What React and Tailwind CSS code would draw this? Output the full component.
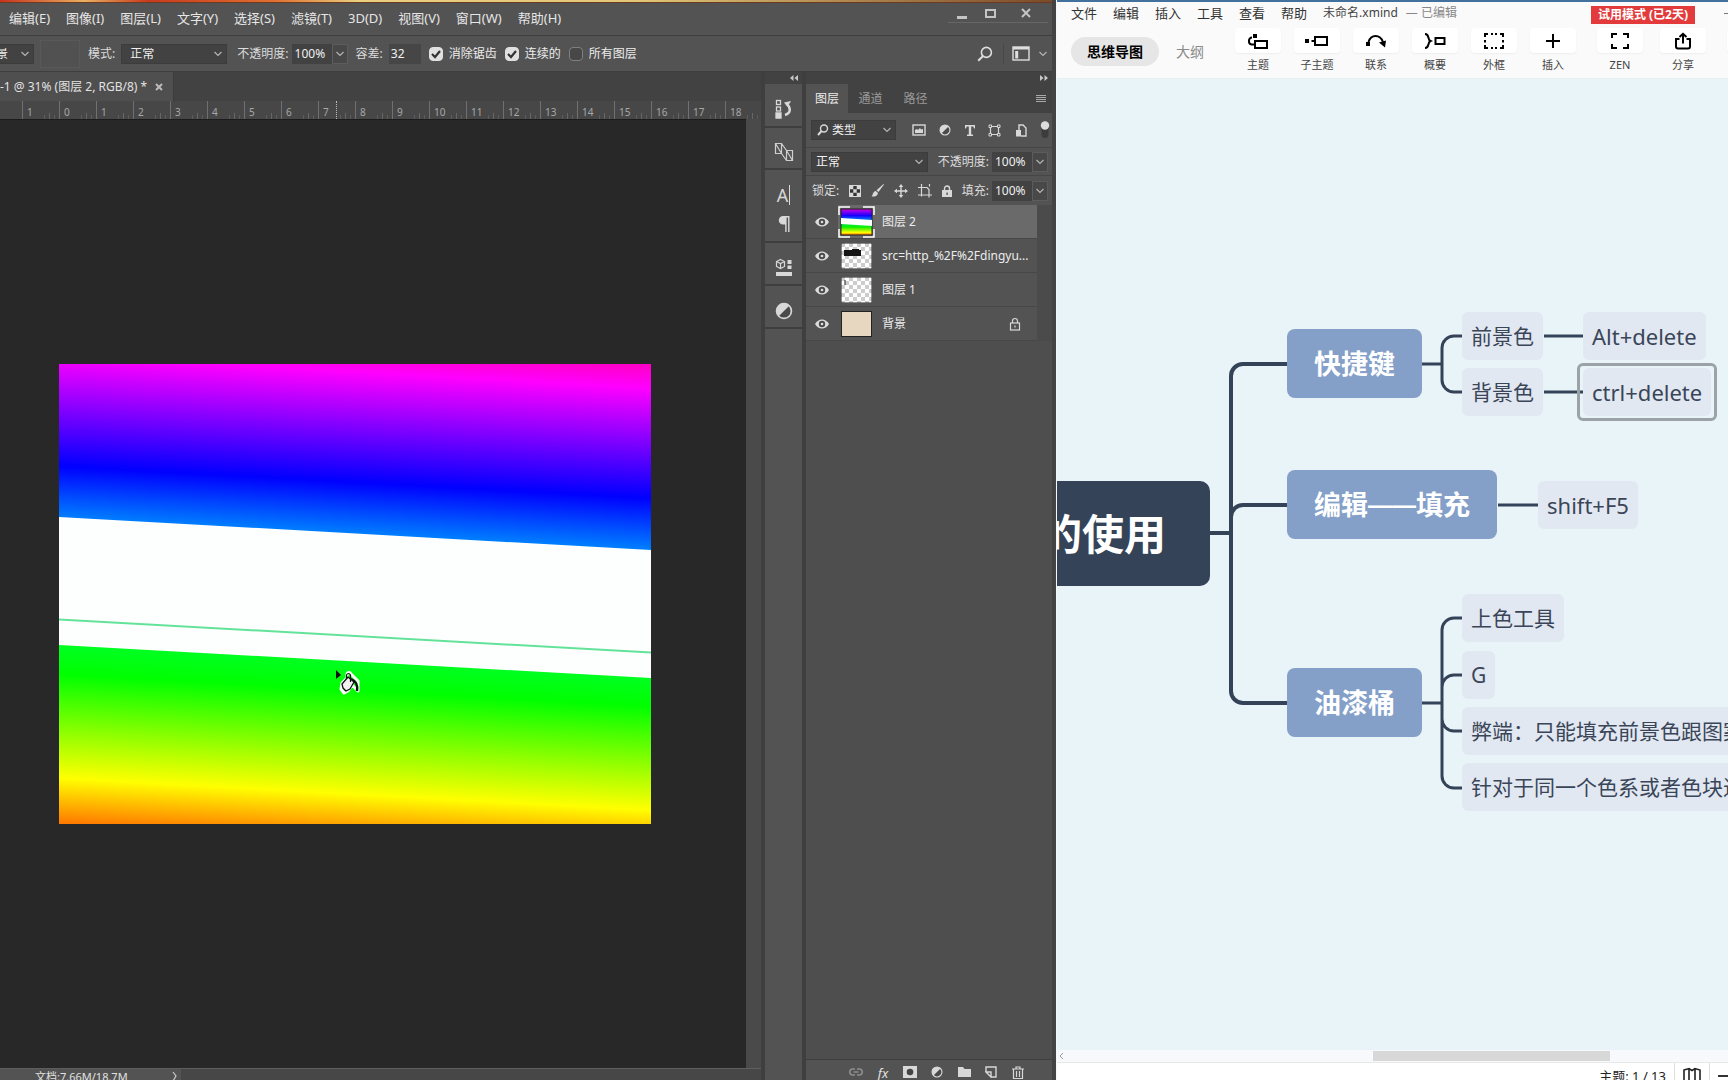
import React from "react";

const uiFont = "font-['Noto_Sans','Noto_Sans_CJK_SC',sans-serif]";

function Chevron({ className = "" }) {
  return (
    <svg viewBox="0 0 10 6" className={`pointer-events-none h-1.5 w-2.5 ${className}`} fill="none" stroke="#b4b4b4" strokeWidth="1.2" aria-hidden="true">
      <path d="M1.5 1 5 4.5 8.5 1" />
    </svg>
  );
}

function DarkSelect({ label, value, className = "", selectClass = "" }) {
  return (
    <div className={`relative flex shrink-0 ${className}`}>
      <select aria-label={label} defaultValue={value} className={`h-5 w-full appearance-none border border-[#3c3c3c] bg-[#424242] text-xs leading-none text-[#f0f0f0] outline-none ${selectClass}`}>
        <option>{value}</option>
      </select>
      <Chevron className="absolute right-1 top-[7px]" />
    </div>
  );
}

function PercentField({ label, id }) {
  return (
    <div className="flex shrink-0 items-center">
      <label htmlFor={id} className="whitespace-nowrap text-xs text-[#dcdcdc]">{label}</label>
      <input id={id} defaultValue="100%" className="h-5 w-10 bg-[#424242] pl-[3px] text-xs text-[#f0f0f0] outline-none" />
      <button aria-label={`${label} 选项`} className="flex h-5 w-4 items-center justify-center border border-[#5c5c5c] bg-[#484848]">
        <Chevron />
      </button>
    </div>
  );
}

function Tick({ label, checked }) {
  return (
    <label className="flex shrink-0 items-center gap-1.5 whitespace-nowrap text-xs text-[#ececec]">
      <span className="relative flex size-3.5">
        <input type="checkbox" defaultChecked={checked} className="peer size-3.5 appearance-none rounded-sm border border-[#808080] bg-[#474747] checked:border-[#e0e0e0] checked:bg-[#e0e0e0]" />
        <svg viewBox="0 0 14 14" className="pointer-events-none absolute inset-0 hidden size-3.5 peer-checked:block" fill="none" stroke="#333" strokeWidth="2.2" aria-hidden="true">
          <path d="M3 7l3 3 5-6" />
        </svg>
      </span>
      {label}
    </label>
  );
}

const psMenus = ["编辑(E)", "图像(I)", "图层(L)", "文字(Y)", "选择(S)", "滤镜(T)", "3D(D)", "视图(V)", "窗口(W)", "帮助(H)"];

function PsMenuBar() {
  return (
    <header className="flex h-[33px] shrink-0 items-start justify-between border-b border-[#3e3e3e] bg-[#535353]">
      <nav className="flex h-8 items-center gap-4 pl-[9px]">
        {psMenus.map((m) => (
          <button key={m} className="whitespace-nowrap text-[13px] text-[#e6e6e6]">{m}</button>
        ))}
      </nav>
      <div className="mr-1 flex h-5 items-center border-b border-[#666]">
        <button aria-label="最小化" className="flex h-full w-7 items-center justify-center">
          <svg viewBox="0 0 12 12" className="size-3"><path d="M1 9h10v3H1z" fill="#c4c4c4" /></svg>
        </button>
        <button aria-label="最大化" className="flex h-full w-7 items-center justify-center">
          <svg viewBox="0 0 12 12" className="size-3"><rect x="2" y="3" width="9" height="7" fill="none" stroke="#c4c4c4" strokeWidth="2" /></svg>
        </button>
        <button aria-label="关闭" className="flex h-full w-11 items-center justify-center">
          <svg viewBox="0 0 12 12" className="size-3"><path d="M2 2l8 8M10 2l-8 8" fill="none" stroke="#c4c4c4" strokeWidth="2" /></svg>
        </button>
      </div>
    </header>
  );
}

function PsOptionsBar() {
  return (
    <div className="flex h-9 shrink-0 items-center border-b border-[#3e3e3e] bg-[#535353]">
      <DarkSelect label="填充源" value="前景" className="-ml-5 w-[54px]" selectClass="pl-[3px]" />
      <div className="ml-1.5 h-7 w-10 shrink-0 border border-[#595959] bg-[#515151]" />
      <span className="ml-2 shrink-0 text-xs text-[#dcdcdc]">模式:</span>
      <DarkSelect label="模式" value="正常" className="ml-1.5 w-[106px]" selectClass="pl-2" />
      <div className="ml-2.5"><PercentField id="tool-opacity" label={"不透明度:\u00a0"} /></div>
      <label htmlFor="tolerance" className="ml-2 shrink-0 text-xs text-[#dcdcdc]">容差:</label>
      <input id="tolerance" defaultValue="32" className="ml-1.5 h-5 w-8 shrink-0 bg-[#464646] pl-0.5 text-xs text-[#f0f0f0] outline-none" />
      <div className="ml-2 flex items-center gap-2">
        <Tick label="消除锯齿" checked />
        <Tick label="连续的" checked />
        <Tick label="所有图层" />
      </div>
      <div className="ml-auto mr-1 flex items-center">
        <button aria-label="搜索" className="mr-2.5">
          <svg viewBox="0 0 16 16" className="size-4" fill="none" stroke="#dedede" strokeWidth="1.6"><circle cx="9.4" cy="6.4" r="5" /><path d="M5.8 10.2 1.2 14.8" strokeWidth="2" /></svg>
        </button>
        <span className="h-5 w-px bg-[#474747]" />
        <button aria-label="工作区" className="ml-2 flex items-center gap-2">
          <svg viewBox="0 0 18 15" className="h-[15px] w-[18px]"><rect x="1" y="1" width="16" height="13" fill="none" stroke="#dedede" strokeWidth="1.4" /><path d="M1 1h16v2.4H1zM3.2 5h3v7.4h-3z" fill="#dedede" /></svg>
          <Chevron />
        </button>
      </div>
    </div>
  );
}

function Ruler() {
  const marks = ["1", ...Array.from({ length: 19 }, (_, i) => String(i))];
  return (
    <div className="relative flex h-[18px] shrink-0 overflow-hidden bg-[#474747]">
      <div className="w-[22px] shrink-0" />
      {marks.map((m, i) => (
        <div key={i} className="flex w-[37px] shrink-0 items-end justify-between border-l border-[#707070]">
          <span className="pl-1 text-[10px] leading-[14px] text-[#a8a8a8]">{m}</span>
          <span className="flex items-end gap-1 pr-1">
            <i className="h-1 w-px bg-[#5c5c5c]" />
            <i className="h-1.5 w-px bg-[#666]" />
            <i className="h-1 w-px bg-[#5c5c5c]" />
          </span>
        </div>
      ))}
      <div className="absolute left-[336px] top-0 h-full border-l border-dotted border-[#bdbdbd]" />
    </div>
  );
}

function Artwork() {
  return (
    <svg viewBox="0 0 592 460" className="h-[460px] w-[592px] shrink-0" role="img" aria-label="彩虹渐变画布">
      <defs>
        <linearGradient id="rainbow" gradientUnits="userSpaceOnUse" x1="0" y1="-112" x2="-33" y2="498">
          <stop offset="0" stopColor="#ff0000" />
          <stop offset="0.17" stopColor="#ff00ff" />
          <stop offset="0.35" stopColor="#0000ff" />
          <stop offset="0.52" stopColor="#00ffff" />
          <stop offset="0.644" stopColor="#00ff20" />
          <stop offset="0.69" stopColor="#00ff00" />
          <stop offset="0.86" stopColor="#ffff00" />
          <stop offset="1" stopColor="#ff0000" />
        </linearGradient>
      </defs>
      <rect width="592" height="460" fill="url(#rainbow)" />
      <path d="M0 153 592 186V314L0 281Z" fill="#fdfffe" />
      <path d="M0 255.500 592 288.500" stroke="#63e39a" strokeWidth="2" />
      <path d="M277 306v9l5-4z" fill="#101010" />
      <path d="M283 319l5-5v-4c1-2 3-2 4 0l7 7v10l-6-6-4 6-4 2-3-4z" fill="none" stroke="#fff" strokeWidth="3" strokeLinejoin="round" />
      <path d="M292 315c5 2 7 6 6 12" fill="none" stroke="#111" strokeWidth="2.4" />
      <path d="M283 320l6-7 6 5-4 7-4 2-3-3z" fill="#f2f2f2" stroke="#111" strokeWidth="1.3" strokeLinejoin="round" />
      <path d="M287.500 315v-4c1-2 3-2 4 0v7" fill="none" stroke="#111" strokeWidth="1.2" />
    </svg>
  );
}

function PsDocument() {
  return (
    <section className="flex min-w-0 flex-1 flex-col overflow-hidden bg-[#424242]">
      <div className="flex h-[29px] shrink-0">
        <div className="flex w-[174px] items-center gap-2 border-r border-[#3c3c3c] bg-[#4f4f4f] text-xs text-[#e2e2e2]">
          <span className="whitespace-nowrap">-1 @ 31% (图层 2, RGB/8) *</span>
          <button aria-label="关闭文档">
            <svg viewBox="0 0 8 8" className="size-2" fill="none" stroke="#bbb" strokeWidth="2"><path d="M1 1l6 6M7 1 1 7" /></svg>
          </button>
        </div>
      </div>
      <Ruler />
      <div className="flex min-h-0 flex-1 bg-[#4a4a4a]">
        <div className="flex flex-1 items-center justify-center overflow-hidden border-t border-[#1c1c1c] bg-[#282828] pr-9">
          <Artwork />
        </div>
        <div className="w-[15px] shrink-0" />
      </div>
      <footer className="flex h-3 shrink-0 overflow-hidden border-t border-[#5e5e5e] bg-[#474747] text-[11px] leading-[15px] text-[#e2e2e2]">
        <div className="flex w-[181px] justify-between bg-[#535353] pl-[35px] pr-1">
          <span>文档:7.66M/18.7M</span>
          <svg viewBox="0 0 5 10" className="mt-0.5 h-2.5 w-[5px]" fill="none" stroke="#ccc" strokeWidth="1.2" aria-hidden="true"><path d="M1 1l3 4-3 5" /></svg>
        </div>
      </footer>
    </section>
  );
}

function HalfCircle({ className = "size-4" }) {
  return (
    <svg viewBox="0 0 16 16" className={className} aria-hidden="true">
      <circle cx="8" cy="8" r="6.600" fill="#4a4a4a" stroke="#d8d8d8" strokeWidth="1.5" />
      <path d="M12.700 3.300A6.600 6.600 0 1 0 3.300 12.700Z" fill="#d8d8d8" />
    </svg>
  );
}

function DockGroup({ children, className }) {
  return (
    <div className={`flex flex-col items-center justify-evenly border-b-2 border-[#3e3e3e] ${className}`}>{children}</div>
  );
}

function PsDock() {
  return (
    <aside className="flex w-[45px] shrink-0 flex-col border-x-4 border-[#3f3f3f] bg-[#535353]">
      <div className="flex h-3 justify-end bg-[#424242] pr-1">
        <button aria-label="展开面板">
          <svg viewBox="0 0 8 6" className="h-1.5 w-2" fill="#c8c8c8"><path d="M3.500 0v6L0 3zM8 0v6L4.500 3z" /></svg>
        </button>
      </div>
      <DockGroup className="h-11 pt-2">
        <button aria-label="历史记录">
          <svg viewBox="0 0 18 20" className="h-5 w-[18px]" fill="none" stroke="#d8d8d8" strokeWidth="1.3">
            <rect x="1.500" y="1.500" width="4" height="4" /><rect x="1.500" y="8" width="4" height="4" /><path d="M1 14h5v5H1z" fill="#d8d8d8" />
            <path d="M10 16c6-2 6-7 2-11" strokeWidth="2.400" /><path d="M9 3.500l7-1.500-3.500 6z" fill="#d8d8d8" stroke="none" />
          </svg>
        </button>
      </DockGroup>
      <DockGroup className="h-[42px] pt-2">
        <button aria-label="图层复合">
          <svg viewBox="0 0 20 20" className="size-5" fill="none" stroke="#cfcfcf" strokeWidth="1.200">
            <path d="M1.500 1.500h6v10h-6zM12.500 8.500h6v10h-6zM1.500 1.500l6 10M7.500 1.500l5 7M7.500 11.500l5 7M12.500 8.500l6 10" />
          </svg>
        </button>
      </DockGroup>
      <DockGroup className="h-[73px] pt-1">
        <button aria-label="字符" className="flex items-center gap-px text-lg leading-6 text-[#d8d8d8]">A<span className="h-5 w-px bg-[#d8d8d8]" /></button>
        <button aria-label="段落">
          <svg viewBox="0 0 12 16" className="h-4 w-3" fill="#d8d8d8"><path d="M11.500 0v16h-1.400V1.400H8.600V16H7.200V8.500H5A4.200 4.200 0 0 1 5 0z" /></svg>
        </button>
      </DockGroup>
      <DockGroup className="h-[43px] pt-2">
        <button aria-label="库">
          <svg viewBox="0 0 18 20" className="h-5 w-[18px]" fill="none" stroke="#d8d8d8" strokeWidth="1.200">
            <path d="M5.500 1.500l4 2v5l-4 2-4-2v-5zM1.500 3.500l4 2 4-2M5.500 5.500v5" /><path d="M12.500 2h4v4h-4zM12.500 7.500h4v3.500h-4zM1 14h16v4H1z" fill="#d8d8d8" stroke="none" />
          </svg>
        </button>
      </DockGroup>
      <DockGroup className="h-[43px] pt-2">
        <button aria-label="调整"><HalfCircle className="size-[18px]" /></button>
      </DockGroup>
    </aside>
  );
}

function Checker({ children }) {
  return (
    <svg viewBox="0 0 31 26" className="h-[26px] w-[31px] shrink-0" aria-hidden="true">
      <defs>
        <pattern id="chk" width="8" height="8" patternUnits="userSpaceOnUse"><path d="M0 0h8v8H0z" fill="#fff" /><path d="M0 0h4v4H0zM4 4h4v4H4z" fill="#ccc" /></pattern>
      </defs>
      <path d="M0 0h31v26H0z" fill="url(#chk)" stroke="#222" strokeWidth="1" />
      {children}
    </svg>
  );
}

const layers = [
  {
    name: "图层 2",
    active: true,
    thumb: (
      <svg viewBox="0 0 37 32" className="-mx-[3px] h-8 w-[37px] shrink-0" aria-hidden="true">
        <defs>
          <linearGradient id="mini" x1="0" y1="0" x2="0" y2="1">
            <stop offset="0" stopColor="#d400e0" /><stop offset="0.250" stopColor="#1a00ff" /><stop offset="0.380" stopColor="#0060ff" />
            <stop offset="0.620" stopColor="#00f020" /><stop offset="0.700" stopColor="#10f000" /><stop offset="0.900" stopColor="#ffff00" /><stop offset="1" stopColor="#ff7000" />
          </linearGradient>
        </defs>
        <path d="M3 3h31v26H3z" fill="url(#mini)" stroke="#222" />
        <path d="M3 12l31 2v6L3 18z" fill="#fff" />
        <path d="M1 9V1h11M25 1h11v8M36 23v8H25M12 31H1v-8" fill="none" stroke="#fff" strokeWidth="1.500" />
      </svg>
    ),
  },
  { name: "src=http_%2F%2Fdingyu...", thumb: <Checker><path d="M3 7h8V6h7v1h2v6H3z" fill="#161616" /></Checker> },
  { name: "图层 1", thumb: <Checker><path d="M4 3v5" stroke="#222" /></Checker> },
  { name: "背景", locked: true, thumb: <div className="h-[26px] w-[31px] shrink-0 border border-[#222] bg-[#e8d7c0]" /> },
];

function LayerRow({ layer }) {
  return (
    <li className="flex h-[34px] border-b border-[#474747]">
      <button aria-label={`切换可见性 ${layer.name}`} className="flex w-8 shrink-0 items-center justify-center">
        <svg viewBox="0 0 14 10" className="h-2.5 w-3.5" aria-hidden="true"><path d="M0 5c3.500-6 10.500-6 14 0-3.500 6-10.500 6-14 0z" fill="#dcdcdc" /><circle cx="7" cy="5" r="3.200" fill="#4a4a4a" /><circle cx="7" cy="5" r="1.300" fill="#dcdcdc" /></svg>
      </button>
      <div className={`flex min-w-0 flex-1 items-center pl-[3px] ${layer.active ? "bg-[#6a6a6a]" : ""}`}>
        {layer.thumb}
        <span className="ml-2.5 flex-1 whitespace-nowrap text-xs text-[#ececec]">{layer.name}</span>
        {layer.locked && (
          <svg viewBox="0 0 12 14" className="mr-4 h-3.5 w-3" fill="none" stroke="#d8d8d8" strokeWidth="1.200" aria-label="已锁定"><rect x="1.500" y="6" width="9" height="7" /><path d="M3.500 6V4a2.500 2.500 0 0 1 5 0v2M6 8.500v2" /></svg>
        )}
      </div>
    </li>
  );
}

const ic = { fill: "none", stroke: "#d8d8d8", strokeWidth: 1.4 };

function PsLayersPanel() {
  return (
    <aside className="flex w-[246px] shrink-0 flex-col bg-[#535353]">
      <div className="flex h-3 shrink-0 justify-end bg-[#424242] pr-1">
        <button aria-label="折叠面板">
          <svg viewBox="0 0 8 6" className="h-1.5 w-2" fill="#c8c8c8"><path d="M0 0v6l3.500-3zM4.500 0v6L8 3z" /></svg>
        </button>
      </div>
      <div role="tablist" className="flex h-[29px] shrink-0 bg-[#424242] text-xs">
        <button role="tab" aria-selected="true" className="w-[42px] bg-[#535353] text-[#ececec]">图层</button>
        <button role="tab" aria-selected="false" className="w-[45px] text-[#9a9a9a]">通道</button>
        <button role="tab" aria-selected="false" className="w-[45px] text-[#9a9a9a]">路径</button>
        <button aria-label="面板菜单" className="ml-auto mr-1.5">
          <svg viewBox="0 0 10 8" className="h-2 w-2.5" stroke="#a8a8a8" strokeWidth="1"><path d="M0 .500h10M0 2.500h10M0 4.500h10M0 6.500h10" /></svg>
        </button>
      </div>
      <div className="flex h-[35px] shrink-0 items-center justify-between border-b border-[#454545] pl-[5px] pr-0.5">
        <div className="relative">
          <DarkSelect label="筛选类型" value="类型" className="w-[85px]" selectClass="pl-5" />
          <svg viewBox="0 0 12 12" className="pointer-events-none absolute left-1.5 top-1 size-3" {...ic}><circle cx="7" cy="4.500" r="3.500" /><path d="M4.500 7 1 11" strokeWidth="2" /></svg>
        </div>
        <div className="flex w-[138px] items-center justify-between">
          <button aria-label="像素图层"><svg viewBox="0 0 14 12" className="h-3 w-3.5" {...ic}><rect x="1" y="1" width="12" height="10" /><path d="M3 9V6l2-1 1 1 2-2 1 1.500L11 5v4z" fill="#d8d8d8" stroke="none" /></svg></button>
          <button aria-label="调整图层"><HalfCircle className="size-3" /></button>
          <button aria-label="文字图层"><svg viewBox="0 0 10 11" className="h-[11px] w-2.5" fill="#d8d8d8"><path d="M0 0h10v3.500H9L8.300 1.500H6.200v8H8V11H2V9.500h1.800v-8H1.700L1 3.500H0z" /></svg></button>
          <button aria-label="形状图层"><svg viewBox="0 0 13 13" className="size-[13px]" fill="none" stroke="#d8d8d8" strokeWidth="1.200"><path d="M2.500 2.500h8v8h-8z" /><path d="M1 1h2.500v2.500H1zM9.500 1H12v2.500H9.500zM1 9.500h2.500V12H1zM9.500 9.500H12V12H9.500z" fill="#535353" strokeWidth="1" /></svg></button>
          <button aria-label="智能对象"><svg viewBox="0 0 12 13" className="h-[13px] w-3" {...ic}><path d="M4 6V1h4l3 3v8H6" /><path d="M1 6h5v6.500H1z" fill="#d8d8d8" stroke="none" /></svg></button>
          <button aria-label="筛选开关"><svg viewBox="0 0 10 18" className="h-[18px] w-2.5"><rect x="1.500" y="3" width="7" height="14" rx="3.500" fill="#3c3c3c" /><circle cx="5" cy="4.500" r="4.200" fill="#dcdcdc" /></svg></button>
        </div>
      </div>
      <div className="flex h-7 shrink-0 items-center justify-between border-b border-[#454545] pl-[5px] pr-1">
        <DarkSelect label="混合模式" value="正常" className="w-[117px]" selectClass="pl-1" />
        <PercentField id="layer-opacity" label={"不透明度:\u00a0"} />
      </div>
      <div className="flex h-[29px] shrink-0 items-center justify-between pl-1.5 pr-1">
        <span className="text-xs text-[#dcdcdc]">锁定:</span>
        <div className="flex w-[103px] items-center justify-between">
          <button aria-label="锁定透明像素"><svg viewBox="0 0 12 12" className="size-3"><rect x=".500" y=".500" width="11" height="11" fill="#333" stroke="#d8d8d8" /><path d="M1 1h3.300v3.300H1zM7.700 1H11v3.300H7.700zM4.300 4.300h3.400v3.400H4.300zM1 7.700h3.300V11H1zM7.700 7.700H11V11H7.700z" fill="#d8d8d8" /></svg></button>
          <button aria-label="锁定图像像素"><svg viewBox="0 0 13 13" className="size-[13px]" fill="#d8d8d8"><path d="M12.500 0 13 .500 7.500 8 5.500 6.300zM4.800 7 7 8.900C6.500 12 4 13 .500 12.500 2 11.500 1.500 7.500 4.800 7z" /></svg></button>
          <button aria-label="锁定位置"><svg viewBox="0 0 14 14" className="size-3.5" fill="#d8d8d8"><path d="M7 0l2.300 3H7.700v3.300H11V4.700L14 7l-3 2.300V7.700H7.700V11h1.600L7 14l-2.300-3h1.600V7.700H3v1.600L0 7l3-2.300v1.600h3.300V3H4.700z" /></svg></button>
          <button aria-label="锁定画板"><svg viewBox="0 0 14 14" className="size-3.5" {...ic}><path d="M3.500 0v12.500M0 3.500h9l2 2v8M0 11h14M11.500 0v2.500" strokeWidth="1.200" /></svg></button>
          <button aria-label="锁定全部"><svg viewBox="0 0 10 12" className="h-3 w-2.5"><path d="M2.500 6V3.500a2.500 2.500 0 0 1 5 0V6" {...ic} /><path d="M0 5h10v7H0z" fill="#d8d8d8" /><path d="M4.500 7.500h1.200V10H4.500z" fill="#444" /></svg></button>
        </div>
        <PercentField id="layer-fill" label={"填充:\u00a0"} />
      </div>
      <div className="flex min-h-0 flex-1 bg-[#4e4e4e]">
        <ul className="min-w-0 flex-1 self-start bg-[#535353]">
          {layers.map((l) => <LayerRow key={l.name} layer={l} />)}
        </ul>
        <div className="h-[136px] w-[15px] shrink-0 bg-[#4b4b4b]" />
      </div>
      <div className="flex h-[21px] shrink-0 justify-center gap-[13px] border-t border-[#3e3e3e] bg-[#535353] pl-4 pt-1.5">
        <button aria-label="链接图层" className="flex w-3.5 justify-center"><svg viewBox="0 0 14 12" className="h-3 w-3.5" fill="none" stroke="#8f8f8f" strokeWidth="1.500"><path d="M6 9H3.800a3 3 0 0 1 0-6H6M8 3h2.200a3 3 0 0 1 0 6H8M4.500 6h5" /></svg></button>
        <button aria-label="图层样式" className="w-3.5 font-['Noto_Sans',sans-serif] text-[13px] italic leading-3 text-[#e0e0e0]">fx</button>
        <button aria-label="添加蒙版" className="flex w-3.5 justify-center"><svg viewBox="0 0 14 12" className="h-3 w-3.5"><path d="M0 0h14v12H0z" fill="#d8d8d8" /><circle cx="7" cy="6" r="3.300" fill="#444" /></svg></button>
        <button aria-label="新建调整图层" className="flex w-3.5 justify-center"><HalfCircle className="size-3" /></button>
        <button aria-label="新建组" className="flex w-3.5 justify-center"><svg viewBox="0 0 13 12" className="h-3 w-[13px]" fill="#d8d8d8"><path d="M0 1h5l1.500 2H13v8H0z" /></svg></button>
        <button aria-label="新建图层" className="flex w-3.5 justify-center"><svg viewBox="0 0 12 12" className="size-3" {...ic}><path d="M1 6V1h10v10H6M1 6h5v5z" /></svg></button>
        <button aria-label="删除图层" className="flex w-3.5 justify-center"><svg viewBox="0 0 12 13" className="h-[13px] w-3" fill="none" stroke="#d8d8d8" strokeWidth="1.200"><path d="M0 3h12M4 3V1h4v2M1.500 3v9.500h9V3M4.500 5v6M7.500 5v6" /></svg></button>
      </div>
    </aside>
  );
}

function Photoshop() {
  return (
    <main className="flex min-w-0 flex-col overflow-hidden border-r-4 border-[#444] bg-[#424242]">
      <div className="-mr-1 h-[3px] shrink-0 border-b border-[#6b3a22] bg-[linear-gradient(90deg,#c8321e_0%,#e8b060_8%,#c83a1e_14%,#e07030_26%,#e8d080_34%,#e0c878_60%,#b08850_80%,#7a4a28_100%)]" />
      <PsMenuBar />
      <PsOptionsBar />
      <div className="flex min-h-0 flex-1">
        <PsDocument />
        <PsDock />
        <PsLayersPanel />
      </div>
    </main>
  );
}

const bk = { fill: "none", stroke: "#000", strokeWidth: 2 };
const tools = [
  { label: "主题", icon: <svg viewBox="0 0 22 16" className="h-4 w-[22px]" {...bk}><path d="M8 8h12v7H8zM8 11.500H4.500A3 3 0 0 1 2 8.500v-1a3 3 0 0 1 3-3" /><path d="M6 1h4v4H6z" fill="#000" stroke="none" /></svg> },
  { label: "子主题", icon: <svg viewBox="0 0 24 16" className="h-4 w-6" {...bk}><path d="M10 4h12v8H10zM6.500 8H10" /><path d="M0 6h4v4H0z" fill="#000" stroke="none" /></svg> },
  { label: "联系", icon: <svg viewBox="0 0 22 16" className="h-4 w-[22px]" {...bk}><path d="M3.500 9C6 1 15 1 18 9" /><path d="M1 9h4v4H1zM14 9.500l7-2-1 7z" fill="#000" stroke="none" /></svg> },
  { label: "概要", icon: <svg viewBox="0 0 22 16" className="h-4 w-[22px]" {...bk}><path d="M11.500 5h9v6h-9zM1 1c5 0 2 5.500 5.500 7C3 9.500 6 15 1 15M6 8h1.500" /></svg> },
  { label: "外框", icon: <svg viewBox="0 0 20 16" className="h-4 w-5" {...bk}><path d="M1 4V1h3M7 1h2M11 1h2M16 1h3v3M19 7v2.500M19 12v3h-3M13 15h-2M9 15H7M4 15H1v-3M1 9.500V7" /></svg> },
  { label: "插入", icon: <svg viewBox="0 0 16 16" className="size-4" {...bk}><path d="M8 1v14M1 8h14" /></svg> },
  { label: "ZEN", gap: "ml-2", icon: <svg viewBox="0 0 18 16" className="h-4 w-[18px]" {...bk}><path d="M1 5V1h5M12 1h5v4M17 11v4h-5M6 15H1v-4" /></svg> },
  { label: "分享", gap: "ml-1", icon: <svg viewBox="0 0 18 18" className="size-[18px]" {...bk}><path d="M5.500 7H2v7.500A2 2 0 0 0 4 16.500h10a2 2 0 0 0 2-2V7h-3.500M9 11.500V2M5.500 5 9 1.800 12.500 5" /></svg> },
  { label: "", gap: "ml-2", icon: null },
];

const nodeBlue = "absolute flex items-center rounded-lg bg-[#849fc8] px-[27px] whitespace-nowrap text-[27px] leading-none font-bold text-white";
const leaf = "absolute flex h-12 items-center rounded-md bg-[#e1e8f1] px-[9px] whitespace-nowrap leading-none text-[#3b4558]";

function MindMap() {
  return (
    <section aria-label="思维导图" className="relative min-h-0 flex-1 overflow-hidden bg-[#e9f4f8]">
      <svg viewBox="1057 79 671 971" className="absolute left-0 top-0 h-[971px] w-[671px]" fill="none" stroke="#344358" strokeWidth="4" aria-hidden="true">
        <path d="M1208 533h23M1288 364h-45a12 12 0 0 0-12 12v315a12 12 0 0 0 12 12h45M1231 517a12 12 0 0 1 12-12h45" />
        <path strokeWidth="3" d="M1422 364h20M1463 336h-9a12 12 0 0 0-12 12v32a12 12 0 0 0 12 12h9M1544 336h40M1544 392h40M1498 505h41M1422 703h20M1463 618h-9a12 12 0 0 0-12 12v146a12 12 0 0 0 12 12h9M1442 687a12 12 0 0 1 12-12h9M1442 719a12 12 0 0 0 12 12h9" />
      </svg>
      <div className="absolute left-[-60px] top-[402px] flex h-[105px] w-[213px] items-center justify-end rounded-[10px] bg-[#344358] pr-11 text-[42px] leading-none font-bold whitespace-nowrap text-white">的使用</div>
      <div className={`${nodeBlue} left-[230px] top-[250px] h-[69px]`}>快捷键</div>
      <div className={`${nodeBlue} left-[230px] top-[391px] h-[69px]`}>编辑<span className="font-['Liberation_Sans',sans-serif] text-2xl leading-none">——</span>填充</div>
      <div className={`${nodeBlue} left-[230px] top-[589px] h-[69px]`}>油漆桶</div>
      <div className={`${leaf} left-[405px] top-[233px] text-[21px]`}>前景色</div>
      <div className={`${leaf} left-[405px] top-[289px] text-[21px]`}>背景色</div>
      <div className={`${leaf} left-[526px] top-[233px] text-[22px]`}>Alt+delete</div>
      <div className={`${leaf} left-[526px] top-[289px] text-[22px]`}>
        ctrl+delete
        <span className="absolute -inset-x-1.5 -inset-y-[5px] rounded-md border-[3px] border-[#9ba3a6]" />
      </div>
      <div className={`${leaf} left-[481px] top-[402px] text-[22px]`}>shift+F5</div>
      <div className={`${leaf} left-[405px] top-[515px] text-[21px]`}>上色工具</div>
      <div className={`${leaf} left-[405px] top-[572px] text-[21px]`}>G</div>
      <div className={`${leaf} left-[405px] top-[628px] text-[21px]`}>弊端：只能填充前景色跟图案</div>
      <div className={`${leaf} left-[405px] top-[684px] text-[21px]`}>针对于同一个色系或者色块进行</div>
    </section>
  );
}

function XMind() {
  return (
    <main className="flex min-w-0 flex-col overflow-hidden border-l border-[#f4f8fa] bg-[#fafafa] text-[#333]">
      <header className="flex h-6 shrink-0 items-center justify-between border-t-2 border-[#41719c]">
        <nav className="flex items-center gap-4 pl-3.5 text-[13px]">
          {["文件", "编辑", "插入", "工具", "查看", "帮助"].map((m) => <button key={m} className="whitespace-nowrap leading-5">{m}</button>)}
          <span className="whitespace-nowrap text-xs leading-5 text-[#444]">未命名.xmind<span className="ml-2 text-[#888]">— 已编辑</span></span>
        </nav>
        <div className="flex items-center">
          <span className="mr-[29px] mt-1 h-[18px] whitespace-nowrap bg-[#e33b3b] px-[7px] text-xs leading-[18px] font-bold text-white">试用模式 (已2天)</span>
          <button aria-label="最小化" className="h-4 w-1 overflow-hidden"><span className="block h-px w-3 bg-[#777]" /></button>
        </div>
      </header>
      <div className="flex h-[55px] shrink-0 items-start overflow-hidden border-b border-[#e9eef0]">
        <div className="mt-[13px] flex shrink-0 items-center pl-3.5">
          <button className="h-[29px] w-[88px] rounded-full bg-[#e6e6e6] text-sm font-bold text-black">思维导图</button>
          <button className="ml-[17px] text-sm text-[#8c8c8c]">大纲</button>
        </div>
        <div className="ml-[31px] flex shrink-0 gap-[13px] pt-1">
          {tools.map((t, i) => (
            <button key={i} aria-label={t.label || "格式"} className={`flex w-[46px] shrink-0 flex-col items-center ${t.gap || ""}`}>
              <span className="flex h-[25px] w-full items-center justify-center rounded-sm bg-white shadow-xs">{t.icon}</span>
              <span className="mt-0.5 whitespace-nowrap text-[11px] leading-5 text-[#444]">{t.label}</span>
            </button>
          ))}
        </div>
      </div>
      <MindMap />
      <div className="flex h-3 shrink-0 items-center bg-[#f8f9fd]">
        <svg viewBox="0 0 5 8" className="ml-0.5 h-2 w-[5px]" fill="none" stroke="#999" aria-hidden="true"><path d="M4 1 1 4l3 3" /></svg>
        <div className="ml-[46%] h-2.5 w-[237px] bg-[#d8d8d8]" />
      </div>
      <footer className="flex h-[18px] shrink-0 items-start justify-end gap-2 overflow-hidden border-t border-[#e8e8e8] bg-white text-[13px] text-[#222]">
        <span className="whitespace-nowrap pt-1 leading-[18px]">主题: 1 / 13</span>
        <span className="h-full w-px bg-[#e0e0e0]" />
        <button aria-label="导图概览" className="pt-1">
          <svg viewBox="0 0 18 16" className="h-4 w-[18px]" fill="none" stroke="#222" strokeWidth="1.600"><path d="M1 3l5-1.500 3 2 3-2L17 3v12l-5-1.500-3 2-3-2L1 15zM6 1.500v12M12 1.500v12" /></svg>
        </button>
        <span className="h-full w-px bg-[#e0e0e0]" />
        <button aria-label="缩小" className="w-2.5 overflow-hidden pt-3"><span className="block h-0.5 w-3 bg-[#333]" /></button>
      </footer>
    </main>
  );
}

export default function App() {
  return (
    <div className={`grid h-screen grid-cols-[1056fr_672fr] overflow-hidden ${uiFont}`}>
      <Photoshop />
      <XMind />
    </div>
  );
}
